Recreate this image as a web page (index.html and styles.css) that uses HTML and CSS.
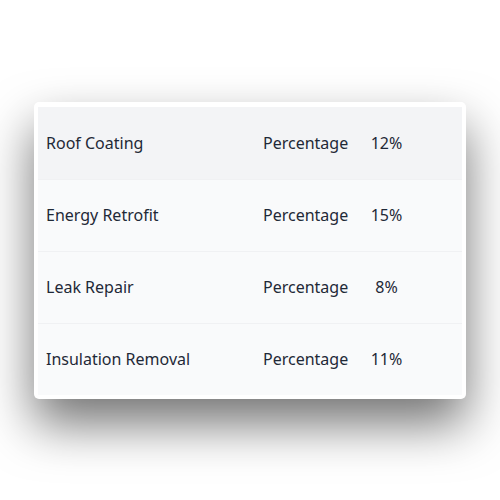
FILE: index.html
```html
<!DOCTYPE html>
<html>
<head>
<meta charset="utf-8">
<link rel="stylesheet" href="styles.css">
</head>
<body>
<div class="card">
  <div class="row row-first">
    <span class="name">Roof Coating</span>
    <span class="type">Percentage</span>
    <span class="value">12%</span>
  </div>
  <div class="row">
    <span class="name">Energy Retrofit</span>
    <span class="type">Percentage</span>
    <span class="value">15%</span>
  </div>
  <div class="row">
    <span class="name">Leak Repair</span>
    <span class="type">Percentage</span>
    <span class="value">8%</span>
  </div>
  <div class="row">
    <span class="name">Insulation Removal</span>
    <span class="type">Percentage</span>
    <span class="value">11%</span>
  </div>
</div>
</body>
</html>
```
FILE: styles.css
```css
html, body {
  margin: 0;
  padding: 0;
  background: #ffffff;
}
body {
  width: 500px;
  height: 500px;
  display: flex;
  align-items: center;
  justify-content: center;
  font-family: "Noto Sans", "Open Sans", sans-serif;
  font-size: 16px;
  color: #1f2937;
}
.card {
  width: 432px;
  box-sizing: border-box;
  padding: 5px 4px 4px;
  background: #ffffff;
  border-radius: 5px;
  box-shadow: 0 25px 50px rgba(0, 0, 0, 0.55);
}
.row {
  display: grid;
  grid-template-columns: 225px 85px 77px;
  align-items: center;
  height: 72px;
  background: #f9fafb;
  border-top: 1px solid #f0f1f3;
  box-sizing: border-box;
}
.row-first {
  background: #f3f4f6;
  border-top: none;
}
.name {
  padding-left: 8px;
}
.type {
  white-space: nowrap;
}
.value {
  text-align: center;
}
```
